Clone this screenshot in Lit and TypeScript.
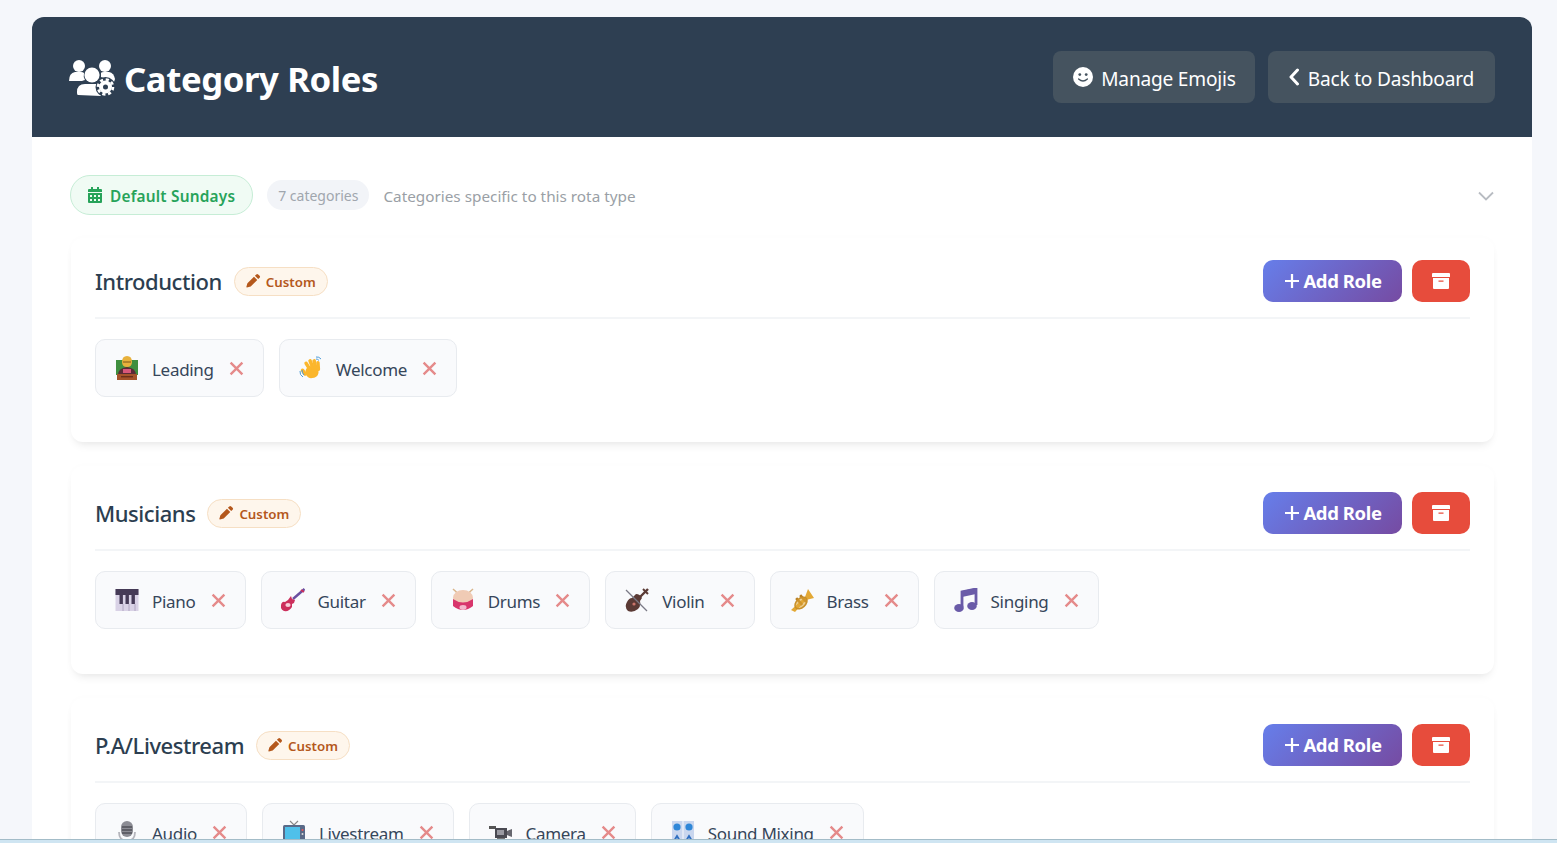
import { LitElement, html, css, svg } from "lit";
import { customElement } from "lit/decorators.js";

// small colour pictures standing in for the role emojis
const emoji: Record<string, unknown> = {
  leading: svg`<rect x="1" y="4" width="22" height="15" fill="#3f8f3f"/><path d="M7 6q0-6 5-6t5 6q0 5-5 5t-5-5z" fill="#e8b13c"/><path d="M8 6h8" stroke="#7a5518" stroke-width="1"/><path d="M3 19q0-7 9-8 9 1 9 8z" fill="#5b2b36"/><rect x="8" y="13" width="8" height="4" fill="#d8577a"/><rect x="2" y="18" width="20" height="6" fill="#a5532a"/><rect x="6" y="20" width="12" height="1.400" fill="#6b2f1a"/>`,
  wave: svg`<g fill="#fbb62c"><rect x="6.500" y="10" width="13" height="12" rx="5.500" transform="rotate(-12 13 16)"/><rect x="7" y="5" width="3.600" height="11" rx="1.800" transform="rotate(-32 9 10)"/><rect x="10.500" y="3" width="3.600" height="11" rx="1.800" transform="rotate(-22 12 8)"/><rect x="14" y="3" width="3.600" height="11" rx="1.800" transform="rotate(-12 16 8)"/><rect x="17.500" y="5" width="3.400" height="10" rx="1.700" transform="rotate(-4 19 10)"/><rect x="3" y="12" width="3.600" height="8" rx="1.800" transform="rotate(-35 5 16)"/></g><path d="M1 15q-.5 4 3 6M3 14q0 3 2 5M17 1q3-.5 5 2M17 3q2 0 3 1.500" stroke="#4e9cd8" stroke-width="1" fill="none"/>`,
  piano: svg`<rect x="0.500" y="1" width="23" height="22" fill="#d9d2e6"/><rect x="0.500" y="1" width="23" height="6" fill="#453a56"/><path d="M4.500 6h3.400v10H4.500zM10.500 6h3.400v10h-3.400zM16.500 6h3.400v10h-3.400z" fill="#453a56"/><path d="M8 16v7M14 16v7M20 16v7" stroke="#a79cb8" stroke-width=".8"/>`,
  guitar: svg`<path d="M23.500 1L12 11" stroke="#6a4fa0" stroke-width="2.400"/><path d="M20 2l3 2" stroke="#cc2f5c" stroke-width="2"/><path d="M10 8l1 3 3 1-1 3-2 1v3q-3 5-8 4-4-2-3-6 1-4 4-3l3-2z" fill="#cc2f5c"/><ellipse cx="7" cy="17" rx="2.600" ry="2" fill="#f6d0da"/>`,
  drums: svg`<path d="M2 1l10 9M22 1L12 10" stroke="#d9b48a" stroke-width="1.500"/><ellipse cx="12" cy="10" rx="10" ry="8" fill="#f0cbb5"/><path d="M2 11v7q10 8 20 0v-7q-10 7-20 0z" fill="#d8366c"/><ellipse cx="12" cy="19.500" rx="3.500" ry="2.400" fill="#f4b8cc"/>`,
  violin: svg`<path d="M23 1L12 12" stroke="#5b3a35" stroke-width="2.400"/><path d="M11 6q4 0 6 4l-2 3q1 5-2 8-5 4-10 2-4-4-1-9 2-4 5-4z" fill="#5b3a35"/><circle cx="9" cy="16" r="1.600" fill="#c9746a"/><path d="M1 2l21 21" stroke="#7a7a86" stroke-width="1.200"/><path d="M18 1l5 5" stroke="#5b3a35" stroke-width="2"/>`,
  brass: svg`<path d="M1 22L15 9l3-8 6 9-8 2L5 24z" fill="#e3a835"/><rect x="7.500" y="9" width="2.600" height="9" transform="rotate(-42 9 13)" fill="#b97f22"/><rect x="11.500" y="6" width="2.600" height="9" transform="rotate(-42 13 10)" fill="#b97f22"/><ellipse cx="11" cy="15" rx="7" ry="4.500" transform="rotate(-42 11 15)" fill="#e3a835" fill-opacity=".55" stroke="#c8902a" stroke-width="1.600"/>`,
  singing: svg`<path d="M8 19V4l14-3v16" fill="none" stroke="#6a5ba8" stroke-width="2.800"/><path d="M8 3l14-3v6L8 9z" fill="#6a5ba8"/><ellipse cx="5" cy="20" rx="4.800" ry="4" fill="#6a5ba8"/><ellipse cx="18" cy="18" rx="4.800" ry="4" fill="#6a5ba8"/>`,
  audio: svg`<rect x="6" y="1" width="12" height="16" rx="6" fill="#8c8c94"/><path d="M7 7h10M7 10h10M7 13h10" stroke="#33333a" stroke-width="1.200"/><path d="M4 12q0 9 8 9t8-9" fill="none" stroke="#b5b5bc" stroke-width="1.800"/>`,
  livestream: svg`<path d="M8 1l4 4 4-4" stroke="#888" stroke-width="1.200" fill="none"/><rect x="1" y="5" width="22" height="18" rx="1.500" fill="#5a6a88"/><rect x="3" y="7" width="15" height="13" fill="#4fc0ea"/><circle cx="20.500" cy="10" r="1" fill="#e55"/><circle cx="20.500" cy="14" r="1" fill="#ddd"/>`,
  camera: svg`<rect x="0" y="6" width="7" height="3" fill="#555"/><path d="M6 8h12v10H6z" fill="#4a4a52"/><rect x="8" y="10" width="7" height="5" fill="#9a9aa2"/><path d="M18 11l5-2v8l-5-2z" fill="#66666e"/><rect x="8" y="18" width="8" height="4" fill="#777"/>`,
  mixing: svg`<rect x="1" y="1" width="10.500" height="22" fill="#c9d6ee"/><rect x="12.500" y="1" width="10.500" height="22" fill="#c9d6ee"/><circle cx="6" cy="7" r="3.600" fill="#2f87d8"/><circle cx="18" cy="7" r="3.600" fill="#2f87d8"/><path d="M3 21l3-5 3 5M15 21l3-5 3 5" stroke="#2f6fc0" stroke-width="1.800" fill="none"/>`,
};

const sections = [
  {
    name: "Introduction",
    roles: [
      ["leading", "Leading"],
      ["wave", "Welcome"],
    ],
  },
  {
    name: "Musicians",
    roles: [
      ["piano", "Piano"],
      ["guitar", "Guitar"],
      ["drums", "Drums"],
      ["violin", "Violin"],
      ["brass", "Brass"],
      ["singing", "Singing"],
    ],
  },
  {
    name: "P.A/Livestream",
    roles: [
      ["audio", "Audio"],
      ["livestream", "Livestream"],
      ["camera", "Camera"],
      ["mixing", "Sound Mixing"],
    ],
  },
];

const usersCog = html`<svg class="title-icon" viewBox="0 0 46 37" fill="#fff">
  <circle cx="10" cy="6" r="6" />
  <circle cx="36" cy="6" r="6" />
  <path d="M0 21q0-8 6-9h6q2 0 3 1-1 4 1 7-2 .5-3 1z" />
  <path d="M32 13q0-1 3-1h5q5 1 6 7l-1 3-13-5z" />
  <circle cx="23" cy="15" r="7.600" />
  <path d="M9 35q-1 0-1-2v-1q0-8 8-8h12q4 0 6 2l-2 10z" />
  <circle cx="36.500" cy="27" r="10" fill="#2e3f52" />
  <circle cx="36.500" cy="27" r="4.500" fill="none" stroke="#fff" stroke-width="4" />
  <circle cx="36.500" cy="27" r="7.500" fill="none" stroke="#fff" stroke-width="2.600" stroke-dasharray="3.200 2.690" />
</svg>`;

const smile = html`<svg class="btn-icon" viewBox="0 0 20 20">
  <circle cx="10" cy="10" r="10" fill="#fff" />
  <circle cx="6.800" cy="7.600" r="1.400" fill="#45535f" />
  <circle cx="13.200" cy="7.600" r="1.400" fill="#45535f" />
  <path d="M5.600 12q4.400 4 8.800 0" fill="none" stroke="#45535f" stroke-width="1.300" stroke-linecap="round" />
</svg>`;

const chevronLeft = html`<svg class="btn-icon back" viewBox="0 0 12 18">
  <path d="M9.500 2 3 9l6.500 7" fill="none" stroke="#fff" stroke-width="3" stroke-linecap="round" stroke-linejoin="round" />
</svg>`;

const calendar = html`<svg class="cal" viewBox="0 0 14 16" fill="#27a35a">
  <path d="M3 0h2v2h4V0h2v2h2q1 0 1 1v2H0V3q0-1 1-1h2z" />
  <path fill-rule="evenodd" d="M0 6h14v9q0 1-1 1H1q-1 0-1-1zm2 2v2h2V8zm4 0v2h2V8zm4 0v2h2V8zM2 12v2h2v-2zm4 0v2h2v-2zm4 0v2h2v-2z" />
</svg>`;

const pencil = html`<svg class="pencil" viewBox="0 0 16 16" fill="#b4581c">
  <path d="M11 1.500q1-1 2 0l1.500 1.500q1 1 0 2L13 6.500 9.500 3zM8.500 4 12 7.500 5 14.500 1 15.500q-.8 0-.6-.8L1.500 11z" />
</svg>`;

const archive = html`<svg class="archive" viewBox="0 0 18 16" fill="#fff">
  <path d="M0 1q0-1 1-1h16q1 0 1 1v3H0z" />
  <path fill-rule="evenodd" d="M1 5h16v10q0 1-1 1H2q-1 0-1-1zm5.500 2.500v1.200h5V7.500z" />
</svg>`;

@customElement("app-root")
export class AppRoot extends LitElement {
  static styles = css`
    :host {
      display: block;
      height: 843px;
      overflow: hidden;
      position: relative;
      box-sizing: border-box;
      padding: 17px 25px 0 32px;
      background: #f5f7fb;
      font-family: "Noto Sans", "Open Sans", "Liberation Sans", sans-serif;
      color: #2c3e50;
    }
    .container {
      background: #fff;
      border-radius: 12px 12px 0 0;
      overflow: hidden;
      height: 1000px;
    }
    header {
      height: 120px;
      box-sizing: border-box;
      padding: 0 37px 0 37px;
      background: #2e3f52;
      display: flex;
      align-items: center;
      justify-content: space-between;
    }
    h1 {
      margin: 4px 0 0;
      display: flex;
      align-items: center;
      gap: 9px;
      color: #fff;
      font-size: 34.700px;
      line-height: 44px;
      font-weight: 700;
      letter-spacing: -0.4px;
    }
    .title-icon {
      width: 46px;
      height: 37px;
      margin-top: -2px;
    }
    .actions {
      display: flex;
      gap: 13px;
    }
    .head-btn {
      display: flex;
      align-items: center;
      gap: 8px;
      height: 52px;
      box-sizing: border-box;
      padding: 0 19px 0 20px;
      border-radius: 8px;
      background: #45535f;
      color: #fff;
      font-size: 19.100px;
      letter-spacing: -0.2px;
    }
    .head-btn:last-child {
      padding-right: 21px;
    }
    .head-btn span {
      padding-top: 3px;
    }
    .btn-icon {
      width: 20px;
      height: 20px;
    }
    .btn-icon.back {
      width: 12px;
      height: 18px;
    }
    .body {
      padding: 38px 38px 0;
    }
    .rota {
      display: flex;
      align-items: center;
      height: 40px;
    }
    .rota-pill {
      display: flex;
      align-items: center;
      gap: 8px;
      height: 40px;
      box-sizing: border-box;
      padding: 0 17px;
      border: 1px solid #c6edd6;
      border-radius: 20px;
      background: #f0fbf4;
      color: #27a35a;
      font-size: 15.400px;
      font-weight: 600;
      letter-spacing: 0.2px;
    }
    .rota-pill span {
      padding-top: 2px;
    }
    .cal {
      width: 14px;
      height: 16px;
    }
    .count {
      margin-left: 14px;
      height: 30px;
      display: flex;
      align-items: center;
      padding: 0 11px;
      border-radius: 15px;
      background: #f2f4f8;
      color: #a0a6ae;
      font-size: 14px;
    }
    .desc {
      margin-left: 14px;
      padding-top: 2px;
      color: #9a9fa6;
      font-size: 15.300px;
    }
    .chev {
      margin: 2px 0 0 auto;
      width: 16px;
      height: 10px;
    }
    .card {
      margin: 23px 0 24px 1px;
      width: 1423px;
      box-sizing: border-box;
      height: 204px;
      padding: 22px 24px 0;
      border-radius: 12px;
      background: #fff;
      box-shadow: 0 6px 10px -4px rgba(0, 0, 0, 0.1), 0 0 8px rgba(0, 0, 0, 0.015);
    }
    .card + .card {
      margin-top: 0;
      height: 208px;
      padding-top: 26px;
    }
    .card-head {
      display: flex;
      align-items: center;
      height: 42px;
      padding-bottom: 15px;
      border-bottom: 2px solid #f3f5f7;
    }
    h2 {
      margin: 0;
      font-size: 22px;
      font-weight: 500;
      letter-spacing: -0.45px;
      color: #2c3e50;
    }
    .custom {
      margin-left: 12px;
      height: 29px;
      box-sizing: border-box;
      display: flex;
      align-items: center;
      gap: 5px;
      padding: 0 11px;
      border: 1px solid #f6dfc4;
      border-radius: 15px;
      background: #fef6ec;
      color: #b4581c;
      font-size: 13.300px;
      font-weight: 600;
    }
    .custom span {
      padding-top: 2px;
    }
    .pencil {
      width: 15px;
      height: 15px;
      margin-top: -2px;
    }
    .add {
      margin-left: auto;
      width: 139px;
      height: 42px;
      box-sizing: border-box;
      padding-left: 2px;
      display: flex;
      align-items: center;
      justify-content: center;
      gap: 4px;
      border-radius: 10px;
      background: linear-gradient(135deg, #667eea, #764ba2);
      color: #fff;
      font-size: 18.500px;
      font-weight: 700;
      letter-spacing: -0.4px;
    }
    .add span {
      margin-top: -2px;
    }
    .plus {
      width: 14px;
      height: 14px;
    }
    .del {
      margin-left: 10px;
      width: 58px;
      height: 42px;
      display: flex;
      align-items: center;
      justify-content: center;
      border-radius: 10px;
      background: #e74c3c;
    }
    .archive {
      width: 18px;
      height: 16px;
    }
    .roles {
      display: flex;
      gap: 15px;
      padding-top: 20px;
    }
    .role {
      display: flex;
      align-items: center;
      height: 58px;
      box-sizing: border-box;
      padding: 0 19px 0 19px;
      border: 1px solid #e8ebef;
      border-radius: 10px;
      background: #f9fafc;
      font-size: 17px;
      letter-spacing: -0.3px;
      color: #36465a;
    }
    .role span {
      padding-top: 2px;
    }
    .pic {
      width: 24px;
      height: 24px;
      margin-right: 13px;
    }
    .x {
      width: 15px;
      height: 15px;
      margin-left: 15px;
    }
    .strip {
      position: absolute;
      left: 0;
      right: 0;
      bottom: 0;
      height: 4px;
      background: #cfe5f2;
      border-top: 1px solid #a3bcc8;
      box-sizing: border-box;
    }
  `;

  render() {
    return html`
      <div class="container">
        <header>
          <h1>${usersCog}<span>Category Roles</span></h1>
          <div class="actions">
            <div class="head-btn">${smile}<span>Manage Emojis</span></div>
            <div class="head-btn">${chevronLeft}<span>Back to Dashboard</span></div>
          </div>
        </header>
        <div class="body">
          <div class="rota">
            <div class="rota-pill">${calendar}<span>Default Sundays</span></div>
            <div class="count">7 categories</div>
            <div class="desc">Categories specific to this rota type</div>
            <svg class="chev" viewBox="0 0 16 10">
              <path d="M1 1.500l7 7 7-7" fill="none" stroke="#b8bcc2" stroke-width="1.800" />
            </svg>
          </div>
          ${sections.map(
            (s) => html`
              <section class="card">
                <div class="card-head">
                  <h2>${s.name}</h2>
                  <div class="custom">${pencil}<span>Custom</span></div>
                  <div class="add">
                    <svg class="plus" viewBox="0 0 15 15">
                      <path d="M7.500 0v15M0 7.500h15" stroke="#fff" stroke-width="2.400" />
                    </svg>
                    <span>Add Role</span>
                  </div>
                  <div class="del">${archive}</div>
                </div>
                <div class="roles">
                  ${s.roles.map(
                    ([pic, label]) => html`
                      <div class="role">
                        <svg class="pic" viewBox="0 0 24 24">${emoji[pic]}</svg>
                        <span>${label}</span>
                        <svg class="x" viewBox="0 0 14 14">
                          <path d="M1.500 1.500l11 11M12.500 1.500l-11 11" stroke="#e58a8a" stroke-width="2.200" />
                        </svg>
                      </div>
                    `
                  )}
                </div>
              </section>
            `
          )}
        </div>
      </div>
      <div class="strip"></div>
    `;
  }
}
